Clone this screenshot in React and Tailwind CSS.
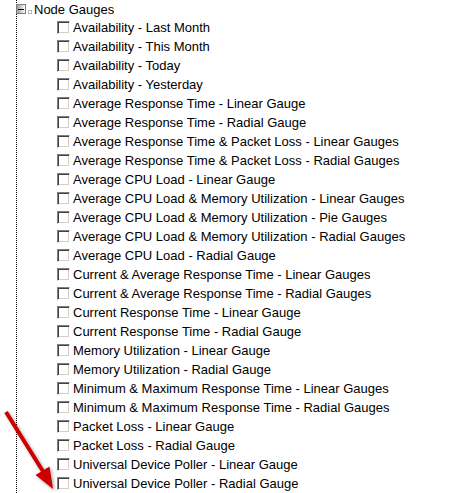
import React from "react";

const items = [
  "Availability - Last Month",
  "Availability - This Month",
  "Availability - Today",
  "Availability - Yesterday",
  "Average Response Time - Linear Gauge",
  "Average Response Time - Radial Gauge",
  "Average Response Time & Packet Loss - Linear Gauges",
  "Average Response Time & Packet Loss - Radial Gauges",
  "Average CPU Load - Linear Gauge",
  "Average CPU Load & Memory Utilization - Linear Gauges",
  "Average CPU Load & Memory Utilization - Pie Gauges",
  "Average CPU Load & Memory Utilization - Radial Gauges",
  "Average CPU Load - Radial Gauge",
  "Current & Average Response Time - Linear Gauges",
  "Current & Average Response Time - Radial Gauges",
  "Current Response Time - Linear Gauge",
  "Current Response Time - Radial Gauge",
  "Memory Utilization - Linear Gauge",
  "Memory Utilization - Radial Gauge",
  "Minimum & Maximum Response Time - Linear Gauges",
  "Minimum & Maximum Response Time - Radial Gauges",
  "Packet Loss - Linear Gauge",
  "Packet Loss - Radial Gauge",
  "Universal Device Poller - Linear Gauge",
  "Universal Device Poller - Radial Gauge",
];

// classic windows-style checkbox
function Check() {
  return (
    <span className="w-[13px] h-[13px] shrink-0 bg-white border border-t-[#808080] border-l-[#808080] border-r-white border-b-white shadow-[inset_1px_1px_0_#404040,inset_-1px_-1px_0_#d4d0c8]" />
  );
}

export default function App() {
  return (
    <div
      className="relative w-[455px] h-[493px] overflow-hidden bg-white text-black text-[13px] leading-[19px]"
      style={{ fontFamily: '"Liberation Sans", Arial, sans-serif' }}
    >
      <div className="ml-[16px] border-l border-dotted border-black h-full">
        {/* header */}
        <div className="flex items-start h-[18px] pt-[4px] -ml-px">
          <span className="w-[10px] h-[10px] border border-[#808080] bg-linear-to-r from-[#9c9c9c] to-white flex items-center justify-center">
            <span className="w-[6px] h-px bg-black" />
          </span>
          <span className="w-[4px] h-[4px] ml-[2px] mt-[6px] border border-[#b8b8b8]" />
          <span className="ml-[2px] -mt-[4px] leading-[19px]">Node Gauges</span>
        </div>

        {/* items */}
        <ul className="pl-[40px]">
          {items.map((t) => (
            <li key={t} className="flex items-center h-[19px] gap-[3px] whitespace-nowrap">
              <Check />
              <span>{t}</span>
            </li>
          ))}
        </ul>
      </div>

      {/* red annotation arrow */}
      <svg
        className="absolute left-0 top-0 pointer-events-none"
        width="80"
        height="493"
        viewBox="0 0 80 493"
      >
        <defs>
          <filter id="sh" x="-50%" y="-50%" width="200%" height="200%">
            <feDropShadow dx="1.5" dy="1.5" stdDeviation="1.5" floodColor="#000" floodOpacity="0.35" />
          </filter>
        </defs>
        <g filter="url(#sh)">
          <line x1="6" y1="412" x2="44" y2="473" stroke="#cc0000" strokeWidth="4" />
          <polygon points="53,489 49.5,466.5 35.5,475" fill="#cc0000" />
        </g>
      </svg>
    </div>
  );
}
